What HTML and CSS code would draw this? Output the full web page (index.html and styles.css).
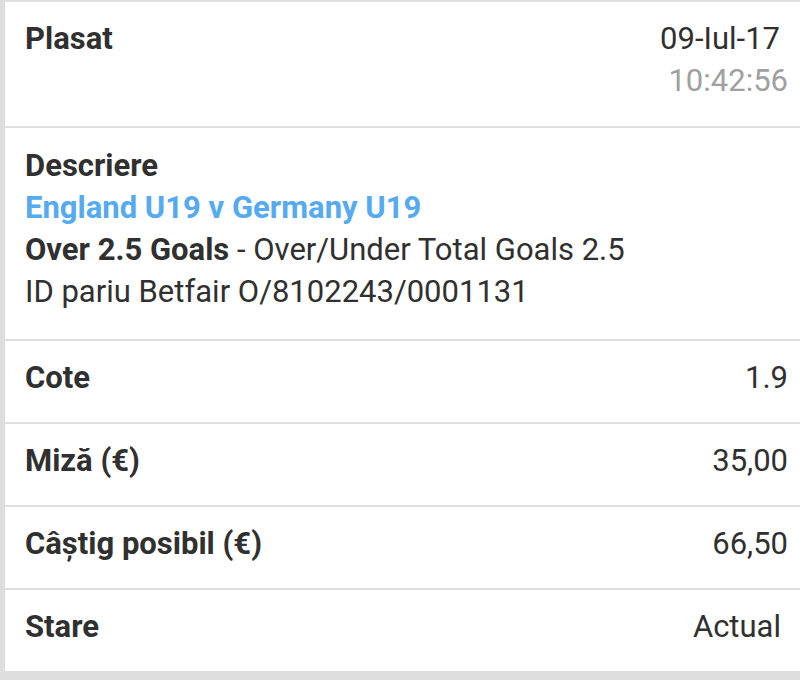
FILE: index.html
```html
<!DOCTYPE html>
<html lang="ro">
<head>
<meta charset="utf-8">
<title>Pariu</title>
<link rel="stylesheet" href="styles.css">
</head>
<body>
<div class="card">
  <div class="row">
    <div class="label">Plasat</div>
    <div class="value stack">
      <div class="date">09-Iul-17</div>
      <div class="time">10:42:56</div>
    </div>
  </div>
  <div class="row block">
    <div class="label">Descriere</div>
    <div class="event">England U19 v Germany U19</div>
    <div class="line"><b>Over 2.5 Goals</b> - Over/Under Total Goals 2.5</div>
    <div class="line">ID pariu Betfair O/8102243/0001131</div>
  </div>
  <div class="row">
    <div class="label">Cote</div>
    <div class="value">1.9</div>
  </div>
  <div class="row">
    <div class="label">Miză (€)</div>
    <div class="value">35,00</div>
  </div>
  <div class="row">
    <div class="label">Câştig posibil (€)</div>
    <div class="value">66,50</div>
  </div>
  <div class="row">
    <div class="label">Stare</div>
    <div class="value inset">Actual</div>
  </div>
</div>
</body>
</html>
```
FILE: styles.css
```css
html, body {
  margin: 0;
  padding: 0;
}
body {
  background: #dedede;
  font-family: Roboto, "Noto Sans", sans-serif;
  font-size: 31px;
  line-height: 42px;
  color: #303030;
  height: 680px;
  overflow: hidden;
}
.card {
  margin: 2px 0 0 5px;
  background: #dedede;
  display: flex;
  flex-direction: column;
  gap: 2px;
}
.row {
  background: #fff;
  display: flex;
  justify-content: space-between;
  align-items: flex-start;
  padding: 16px 12px 23px 20px;
}
.row:first-child {
  padding-bottom: 24px;
}
.row.block {
  display: block;
  padding-top: 17px;
  padding-bottom: 26px;
}
.label {
  font-weight: 700;
}
.value {
  text-align: right;
}
.stack {
  display: flex;
  flex-direction: column;
  align-items: flex-end;
}
.date {
  margin-right: 8px;
}
.time {
  color: #a0a0a0;
}
.inset {
  margin-right: 7px;
}
.event {
  color: #55aaf0;
  font-weight: 700;
}
.line b {
  font-weight: 700;
}
```
